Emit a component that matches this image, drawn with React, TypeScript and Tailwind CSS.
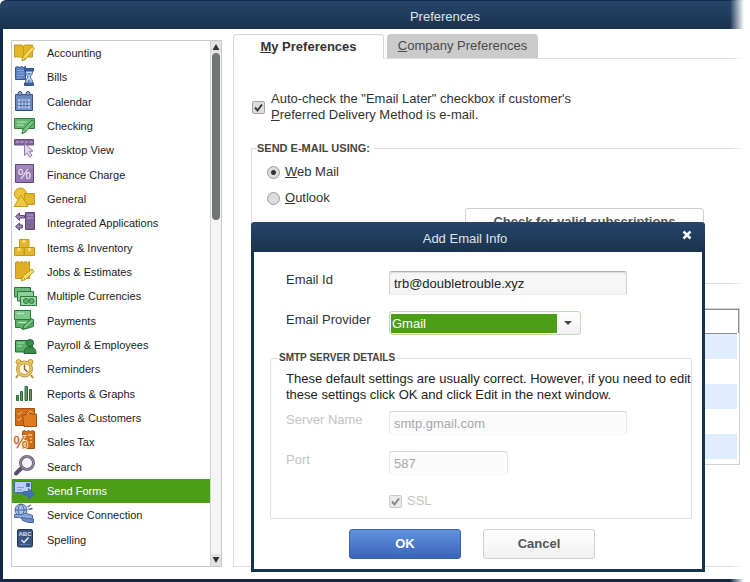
import { useState, ReactNode } from "react";
import clsx from "clsx";

interface Category {
    name: string;
    icon: ReactNode;
}

const CATEGORIES: Category[] = [
    {
        name: "Accounting",
        icon: (
            <g stroke="#c4981a" strokeWidth="1">
                <path d="M2.5 4h7.5l1.5 1L13 4h7.500v12h-7l-2.500 1L9 16H2.5z" fill="#e2b828" />
                <path d="M11.5 5v11" fill="none" />
                <path d="M10 19.5l1-4L20 5.500l2.500 2-9 11z" fill="#f5d868" />
                <path d="M10 19.5l1-4 2.500 2.500z" fill="#fdeeb0" />
            </g>
        ),
    },
    {
        name: "Bills",
        icon: (
            <g stroke="#34548f" strokeWidth="1">
                <path d="M3.5 2.500l2-1 2 1 2-1 2 1 2-1v13h-10z" fill="#5d80bf" />
                <path d="M5 5.500h7M5 8h7M5 10.500h7M5 13h5" stroke="#86a4d8" />
                <path d="M12.500 3.500h9v2.500h-9zM12.500 18h9v2.500h-9z" fill="#3f63a6" />
                <path d="M13.500 6h7c0 3-1 4-2.500 6 1.500 2 2.500 3 2.500 6h-7c0-3 1-4 2.500-6-1.500-2-2.500-3-2.500-6z" fill="#cddcf5" />
                <path d="M15 8h4l-2 3zM15 17l2-3 2 3z" fill="#5c83c4" stroke="none" />
            </g>
        ),
    },
    {
        name: "Calendar",
        icon: (
            <g stroke="#3a5283" strokeWidth="1">
                <path d="M3.5 4.500h17v16h-17z" fill="#6d8abf" />
                <path d="M6 9h12v9.500H6z" fill="#b3c7e8" stroke="none" />
                <path d="M6 12h12M6 15.500h12M9 9v9.500M12 9v9.500M15 9v9.500" stroke="#5873a8" />
                <circle cx="8" cy="3.500" r="2" fill="#8ca5d0" />
                <circle cx="16" cy="3.500" r="2" fill="#8ca5d0" />
            </g>
        ),
    },
    {
        name: "Checking",
        icon: (
            <g stroke="#34803f" strokeWidth="1">
                <path d="M2.500 4.500h20v10h-20z" fill="#65b672" />
                <path d="M5 8h10M5 11h7" stroke="#9fd6a8" strokeWidth="1.5" />
                <path d="M10 19.500l1-4L20 6l2.500 2-9 10z" fill="#7cc687" />
                <path d="M10 19.500l1-4 2.500 2.500z" fill="#c6e9ca" />
            </g>
        ),
    },
    {
        name: "Desktop View",
        icon: (
            <g stroke="#6d5284" strokeWidth="1">
                <path d="M2.500 1.500h19v5.500h-19z" fill="#80659a" />
                <path d="M4 3h3v2H4zM8.500 3h3v2h-3zM13 3h3v2h-3zM17.500 3h3v2h-3z" fill="#a890bd" stroke="none" />
                <path d="M12.500 5.500l8.500 7.500-3.500.5 2.500 4-2.500 1.500-2.500-4-2.500 2.500z" fill="#e2d6ec" stroke="#8f78a6" />
            </g>
        ),
    },
    {
        name: "Finance Charge",
        icon: (
            <g>
                <path d="M3.500 1.500h18v18h-18z" fill="#9379ae" stroke="#614679" />
                <path d="M4 2h17v4H4z" fill="#a088ba" />
                <text x="12.500" y="16" fontSize="15" textAnchor="middle" fill="#f4edf8" fontFamily="Liberation Sans, sans-serif">%</text>
            </g>
        ),
    },
    {
        name: "General",
        icon: (
            <g stroke="#c4981a" strokeWidth="1">
                <circle cx="8.500" cy="7" r="6" fill="#ecc63a" />
                <path d="M12.500 6.500h10v11h-10z" fill="#e3b728" />
                <path d="M9 8l7 11.500H2z" fill="#efcb45" />
            </g>
        ),
    },
    {
        name: "Integrated Applications",
        icon: (
            <g stroke="#5f4876" strokeWidth="1">
                <path d="M13.500 1.500h9v17h-9z" fill="#80679b" />
                <path d="M15 4h6M15 7h6" stroke="#a890bd" strokeWidth="1.5" />
                <path d="M3.500 5.500l4-3.500v2.500h5v2.500h-5V9.500z" fill="#9c84b3" />
                <path d="M3.500 15.500l4-3.500v2h3v3h-3v2z" fill="#9c84b3" />
            </g>
        ),
    },
    {
        name: "Items & Inventory",
        icon: (
            <g fill="#e3b728" stroke="#c4981a" strokeWidth="1">
                <path d="M7.500 3.500h9.500v8h-9.500zM2.500 11.500h9.500v8h-9.500zM12.500 11.500h10v8h-10z" />
                <path d="M10.500 4h3v3h-3zM5.500 12h3v3h-3zM16 12h3v3h-3z" fill="#f3da78" stroke="none" />
            </g>
        ),
    },
    {
        name: "Jobs & Estimates",
        icon: (
            <g stroke="#c4981a" strokeWidth="1">
                <path d="M3.500 2.500l2-1 2 1 2-1 2 1 2-1 2 1 2-1v17h-14z" fill="#dfb024" />
                <path d="M9.500 20.500l1-4L20 9l2 2.500-8.500 8z" fill="#f7dc6e" />
                <path d="M9.500 20.500l1-4 3 3z" fill="#fff3c0" />
            </g>
        ),
    },
    {
        name: "Multiple Currencies",
        icon: (
            <g stroke="#2b7a3c" strokeWidth="1">
                <path d="M2.500 3.500h16v9.500h-16z" fill="#6aba77" />
                <path d="M5.500 7.500h16v9.500h-16z" fill="#8bd096" />
                <path d="M8.500 12.500h16v9h-16z" fill="#9ad9a4" />
                <circle cx="14" cy="17" r="2.500" fill="#62b26f" />
                <circle cx="19.500" cy="17" r="2.500" fill="#62b26f" />
            </g>
        ),
    },
    {
        name: "Payments",
        icon: (
            <g stroke="#2b7a3c" strokeWidth="1">
                <path d="M2.500 1.500h16v9h-16z" fill="#7cc888" />
                <path d="M3.500 10.500h18v7l-5 1.500-6 1.500-2-2h-5z" fill="#5aac68" />
                <path d="M5 4.500h7M6 13.500h9" stroke="#b8e3bf" strokeWidth="1.5" />
                <path d="M11 20l1-3.500L20 9.500l2 2.500-7.500 7z" fill="#7cc687" />
            </g>
        ),
    },
    {
        name: "Payroll & Employees",
        icon: (
            <g stroke="#1f6a33" strokeWidth="1">
                <path d="M3.500 7.500h17v11.500h-17z" fill="#5aac68" />
                <path d="M5 10h7M5 13h5" stroke="#8fcf9a" strokeWidth="1.5" />
                <circle cx="18" cy="10" r="3.500" fill="#3c8a4c" />
                <path d="M12 20.500c0-5 2.500-6.500 6-6.500s6 1.500 6 6.500z" fill="#3c8a4c" />
            </g>
        ),
    },
    {
        name: "Reminders",
        icon: (
            <g stroke="#b8923a" strokeWidth="1">
                <circle cx="6.500" cy="5" r="2.500" fill="#f0cf5a" />
                <circle cx="18.500" cy="5" r="2.500" fill="#f0cf5a" />
                <path d="M6 18l-2 3M19 18l2 3" strokeWidth="2" />
                <circle cx="12.500" cy="12" r="8" fill="#f0cf5a" />
                <circle cx="12.500" cy="12" r="5.500" fill="#fffbe8" />
                <path d="M12.500 7.500V12l3 3" fill="none" stroke="#84682c" strokeWidth="1.5" />
            </g>
        ),
    },
    {
        name: "Reports & Graphs",
        icon: (
            <g fill="#5d9b62" stroke="#2c6a38" strokeWidth="1">
                <path d="M4.500 13.500h2v5h-2zM8.500 9.500h2v9h-2zM13 4.500h2.500v14H13zM17.500 7.500h2v11h-2z" />
            </g>
        ),
    },
    {
        name: "Sales & Customers",
        icon: (
            <g stroke="#a1500f" strokeWidth="1">
                <path d="M3.500 2.500h19v6h-7v11h-12z" fill="#d06d18" />
                <path d="M5.500 7l1.500 1.500 3-3M5.500 13l1.500 1.500 3-3" fill="none" stroke="#f8c58c" />
                <path d="M10.500 9.500l3.500-1 2-3 2.500 2.500h6v12.500H12z" fill="#de7c22" />
                <path d="M15 8l3-3 3 2" stroke="#f6b877" fill="none" />
            </g>
        ),
    },
    {
        name: "Sales Tax",
        icon: (
            <g>
                <path d="M10.500 1.500l2-1 2 1 2-1 2 1 2-1 2 1v17h-12z" fill="#d06d18" stroke="#a1500f" />
                <path d="M16 5h4M18 8.500h2M18 12h2" stroke="#f8c58c" strokeWidth="1.5" />
                <text
                    x="8.500"
                    y="18"
                    fontSize="16"
                    textAnchor="middle"
                    fill="#b9601c"
                    stroke="#fbe6cf"
                    strokeWidth="2"
                    paintOrder="stroke"
                    fontFamily="Liberation Sans, sans-serif"
                >
                    %
                </text>
            </g>
        ),
    },
    {
        name: "Search",
        icon: (
            <g fill="none">
                <path d="M10 12.500L4 18.500" stroke="#5d4d69" strokeWidth="4" strokeLinecap="round" />
                <circle cx="15" cy="8" r="6.500" fill="#f4f2f8" stroke="#75667f" strokeWidth="3" />
                <circle cx="15" cy="8" r="6.500" stroke="#9d8fa9" strokeWidth="1" />
            </g>
        ),
    },
    {
        name: "Send Forms",
        icon: (
            <g stroke="#4468a8" strokeWidth="1">
                <path d="M2.500 2.500h17v11h-17z" fill="#b9cff2" />
                <path d="M5 8.500h7M5 11h5" stroke="#7b9bd0" />
                <path d="M14.500 4.500h3v3h-3z" fill="#3c5f9f" />
                <path d="M11.500 12.500h5v-3l6 5.500-6 5.500v-3.500l-5-1z" fill="#466daf" />
            </g>
        ),
    },
    {
        name: "Service Connection",
        icon: (
            <g stroke="#4a669e" strokeWidth="1">
                <circle cx="9" cy="7" r="6" fill="#a9c0e6" />
                <path d="M3 7h12M9 1c-4 4-4 8 0 12M9 1c4 4 4 8 0 12" fill="none" />
                <path d="M15.500 4l3-2M16.500 6.500l4-1" strokeWidth="1.5" />
                <path d="M2.500 11.500h8l3-1.500 7 2.500v3l-8 1.500-5-2.500h-5z" fill="#8ba6d6" />
                <path d="M9.500 14.500l6 1 6 .5v3.500h-5l-6-2z" fill="#6f8dc4" />
            </g>
        ),
    },
    {
        name: "Spelling",
        icon: (
            <g>
                <rect x="5.500" y="1.500" width="15" height="17.500" rx="1.500" fill="#3c5580" stroke="#22365c" />
                <path d="M7.500 16.500h11" stroke="#5d779f" />
                <text x="13" y="7.500" fontSize="6" fontWeight="bold" textAnchor="middle" fill="#dbe5f5" fontFamily="Liberation Sans, sans-serif">
                    ABC
                </text>
                <path d="M9.500 12l2.500 2.500 4.500-5" fill="none" stroke="#e4ecf8" strokeWidth="1.5" />
            </g>
        ),
    },
];

const TABLE_ROWS = [1, 2, 3, 4, 5];

const titleBar = "bg-linear-to-b from-[#26456a] to-[#1a334e] text-[13px] text-[#dfe5ec]";
const textField =
    "h-6 rounded-[3px] border border-t-[#b0b0b0] border-x-[#d2d2d2] border-b-[#ececec] bg-[#f6f6f6] px-1 text-[13px] text-[#222] shadow-[inset_0_1px_1px_#dcdcdc] disabled:border-t-[#d8d8d8] disabled:border-x-[#e8e8e8] disabled:border-b-[#f8f8f8] disabled:bg-[#fbfbfb] disabled:text-[#a8a8a8] disabled:shadow-none";

function CheckBox({ id, disabled }: { id: string; disabled?: boolean }) {
    return (
        <span className={clsx("relative flex size-[13px] shrink-0", disabled && "opacity-60")}>
            <input
                id={id}
                type="checkbox"
                defaultChecked
                disabled={disabled}
                className="peer size-full appearance-none rounded-[2px] border border-[#a4a4a4] bg-[#dedede]"
            />
            <svg viewBox="0 0 13 13" className="pointer-events-none absolute inset-0 hidden size-full peer-checked:block">
                <path d="M3 6.500l2.500 3L10 3.500" fill="none" stroke="#3a3a3a" strokeWidth="2" />
            </svg>
        </span>
    );
}

function MailOption({ value, defaultChecked, children }: { value: string; defaultChecked?: boolean; children: ReactNode }) {
    return (
        <label className="flex h-[26px] items-center gap-[5px]">
            <input
                type="radio"
                name="mail"
                value={value}
                defaultChecked={defaultChecked}
                className="size-[13px] appearance-none rounded-full border border-[#9c9c9c] bg-[#dcdcdc] checked:bg-[radial-gradient(circle,#333_0_2px,#dcdcdc_3px)]"
            />
            <span>{children}</span>
        </label>
    );
}

function Sidebar() {
    const [selected, setSelected] = useState("Send Forms");

    return (
        <nav className="mt-[11px] mb-3 flex w-[211px] shrink-0 border border-[#c9c9c9]">
            <ul className="grid flex-1 auto-rows-fr pb-[14px]">
                {CATEGORIES.map((category) => (
                    <li key={category.name} className="flex">
                        <button
                            onClick={() => setSelected(category.name)}
                            className={clsx(
                                "flex flex-1 items-center gap-[11px] text-left text-[11px]",
                                selected === category.name ? "bg-[#4d9e17] text-white" : "text-[#1c1c1c]"
                            )}
                        >
                            <svg viewBox="0 0 24 24" className="size-6 shrink-0 overflow-visible">
                                {category.icon}
                            </svg>
                            {category.name}
                        </button>
                    </li>
                ))}
            </ul>

            {/* Scroll bar */}
            <div className="flex w-[11px] flex-col border-l border-[#d4d4d4] bg-[#f4f4f4]">
                <button aria-label="Scroll up" className="flex h-3 items-center justify-center bg-[#e2e2e2]">
                    <svg viewBox="0 0 8 8" className="size-2">
                        <path d="M4 1l3.500 6h-7z" fill="#333" />
                    </svg>
                </button>
                <div className="flex-1 px-px">
                    <div className="h-1/3 rounded-full bg-[#707573]" />
                </div>
                <button aria-label="Scroll down" className="flex h-3 items-center justify-center bg-[#e2e2e2]">
                    <svg viewBox="0 0 8 8" className="size-2">
                        <path d="M4 7l3.500-6h-7z" fill="#333" />
                    </svg>
                </button>
            </div>
        </nav>
    );
}

function EmailDialog() {
    return (
        <section
            role="dialog"
            aria-label="Add Email Info"
            className="absolute top-[222px] left-[251px] z-20 w-[454px] rounded-t-[4px] border-3 border-t-0 border-[#17344f] bg-white text-[13px] text-[#333]"
        >
            <header className={clsx(titleBar, "-mx-[3px] flex h-[30px] items-center rounded-t-[4px] pr-[10px]")}>
                <h2 className="flex-1 pt-1 text-center">Add Email Info</h2>
                <button aria-label="Close" className="flex size-4 items-center justify-center pb-1">
                    <svg viewBox="0 0 10 10" className="size-[10px]">
                        <path d="M1.500 1.500l7 7M8.500 1.500l-7 7" stroke="#f0f3f6" strokeWidth="2.500" />
                    </svg>
                </button>
            </header>

            <form onSubmit={(e) => e.preventDefault()} className="pt-[19px] pr-[10px] pb-[10px] pl-4">
                <div className="grid grid-cols-[103px_238px] gap-y-4 pl-4">
                    <label htmlFor="email" className="pt-px leading-4">Email Id</label>
                    <input id="email" type="email" defaultValue="trb@doubletrouble.xyz" className={textField} />

                    <label htmlFor="provider" className="pt-px leading-4">Email Provider</label>
                    <div className="flex h-6 w-[192px] items-center rounded-[3px] border border-[#c4d8b6] bg-linear-to-b from-white to-[#f0f0f0] p-px">
                        <select id="provider" className="h-[19px] flex-1 appearance-none bg-[#4d9e17] px-px text-white">
                            <option>Gmail</option>
                        </select>
                        <svg viewBox="0 0 22 20" className="h-5 w-[22px]">
                            <path d="M7 8h8l-4 4z" fill="#444" />
                        </svg>
                    </div>
                </div>

                <fieldset className="mt-[17px] rounded-[2px] border border-[#e0e0e0] pb-[7px] pl-[15px]">
                    <legend className="-ml-2 px-px text-[10px] leading-3 font-bold text-[#444]">SMTP SERVER DETAILS</legend>
                    <p className="pt-[7px] leading-4 text-[#222]">
                        These default settings are usually correct. However, if you need to edit these settings click OK and click Edit in the next window.
                    </p>
                    <div className="mt-2 grid grid-cols-[103px_238px] gap-y-4 text-[#c4c4c4]">
                        <label htmlFor="server" className="pt-px leading-4">Server Name</label>
                        <input id="server" disabled defaultValue="smtp.gmail.com" className={textField} />

                        <label htmlFor="port" className="pt-px leading-4">Port</label>
                        <input id="port" disabled defaultValue="587" className={clsx(textField, "w-[119px]")} />

                        <div className="col-start-2 flex h-5 items-center gap-[5px]">
                            <CheckBox id="ssl" disabled />
                            <label htmlFor="ssl">SSL</label>
                        </div>
                    </div>
                </fieldset>

                <div className="mt-[10px] flex justify-center gap-[22px] pr-[18px] font-bold">
                    <button className="h-[30px] w-28 rounded-[3px] border border-[#3c62ae] bg-linear-to-b from-[#6193dc] to-[#3a63bb] text-white">OK</button>
                    <button type="button" className="h-[30px] w-28 rounded-[3px] border border-[#d0d0d0] bg-linear-to-b from-white to-[#f1f1f1] text-[#555]">
                        Cancel
                    </button>
                </div>
            </form>
        </section>
    );
}

export default function App() {
    return (
        <div className="relative flex min-h-screen flex-col bg-white font-['Liberation_Sans',Arial,sans-serif] text-[13px] text-[#333]">
            <header className={clsx(titleBar, "flex h-[29px] items-center justify-center rounded-tl-[6px] border-t border-[#142b45] pt-1 pl-35")}>
                <h1>Preferences</h1>
            </header>

            <main className="flex flex-1 gap-[11px] border-b-3 border-l-3 border-[#14294a] pl-2">
                <Sidebar />

                <div className="mt-[5px] mb-3 flex flex-1 flex-col">
                    <div role="tablist" className="flex items-end">
                        <button role="tab" aria-selected className="h-[25px] w-[151px] rounded-t-[4px] border border-b-0 border-[#d6d6d6] font-bold">
                            <u>M</u>y Preferences
                        </button>
                        <div className="flex flex-1 items-end border-b border-[#dedede] pl-[3px]">
                            <button role="tab" aria-selected={false} className="h-6 w-[151px] rounded-t-[4px] bg-[#cbcbcb] text-[#4a4a4a]">
                                <u>C</u>ompany Preferences
                            </button>
                        </div>
                    </div>

                    <div className="flex flex-1 flex-col border-b border-l border-[#dedede] pl-[17px]">
                        <div className="mt-8 flex items-center gap-[6px] pl-px">
                            <CheckBox id="later" />
                            <label htmlFor="later" className="leading-4">
                                Auto-check the "Email Later" checkbox if customer's
                                <br />
                                <u>P</u>referred Delivery Method is e-mail.
                            </label>
                        </div>

                        <fieldset className="mt-[17px] h-[144px] border border-r-0 border-[#dedede] pl-[15px]">
                            <legend className="-ml-[10px] pr-1 text-[11px] leading-4 font-bold text-[#444]">SEND E-MAIL USING:</legend>
                            <div className="pt-[3px]">
                                <MailOption value="web" defaultChecked>
                                    <u>W</u>eb Mail
                                </MailOption>
                                <MailOption value="outlook">
                                    <u>O</u>utlook
                                </MailOption>
                            </div>
                            <button className="-mt-[3px] ml-[198px] h-7 w-[239px] rounded-[3px] border border-[#cfcfcf] font-bold text-[#555]">
                                Check for valid subscriptions
                            </button>
                        </fieldset>

                        <div className="relative z-10 mt-6 mr-[10px] h-[157px] border border-[#d2d2d2]">
                            <table className="w-full">
                                <thead>
                                    <tr className="h-6 border border-[#8c8c8c]">
                                        <th aria-label="Email accounts" />
                                    </tr>
                                </thead>
                                <tbody>
                                    {TABLE_ROWS.map((row) => (
                                        <tr key={row} className="h-[25px] border-r-2 border-white odd:bg-[#e0edff]">
                                            <td />
                                        </tr>
                                    ))}
                                </tbody>
                            </table>
                        </div>
                    </div>
                </div>
            </main>

            {/* Torn right edge of the window */}
            <div className="pointer-events-none absolute inset-y-0 right-0 w-5 bg-linear-to-r from-white/0 to-white to-70%" />

            <EmailDialog />
        </div>
    );
}
